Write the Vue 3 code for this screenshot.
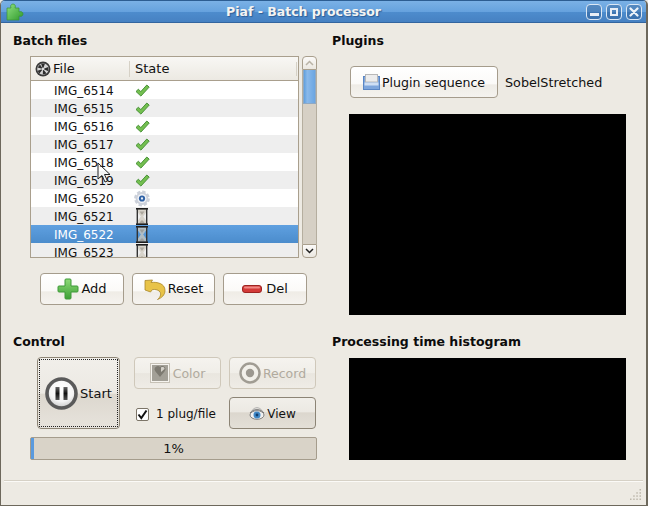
<script setup>
const rows = [
  { name: 'IMG_6514', state: 'ok' },
  { name: 'IMG_6515', state: 'ok' },
  { name: 'IMG_6516', state: 'ok' },
  { name: 'IMG_6517', state: 'ok' },
  { name: 'IMG_6518', state: 'ok' },
  { name: 'IMG_6519', state: 'ok' },
  { name: 'IMG_6520', state: 'run' },
  { name: 'IMG_6521', state: 'wait' },
  { name: 'IMG_6522', state: 'wait', selected: true },
  { name: 'IMG_6523', state: 'wait' }
]
</script>

<template>
  <div class="window">
    <header class="titlebar">
      <svg class="app-icon" width="18" height="18" viewBox="0 0 18 18">
        <defs>
          <linearGradient id="pz" x1="0" y1="0" x2="1" y2="1">
            <stop offset="0" stop-color="#8fe07f"/>
            <stop offset="1" stop-color="#2f9a2c"/>
          </linearGradient>
        </defs>
        <path d="M1 5h4C4 3 5 1 7 1s3 2 2 4h4v4c2-1 4 0 4 2s-2 3-4 2v4H1z" fill="url(#pz)" stroke="#3a9434" stroke-width=".7" stroke-linejoin="round"/>
      </svg>
      <span class="title">Piaf - Batch processor</span>
      <div class="wm-buttons">
        <span class="wm"><i class="wm-min"></i></span>
        <span class="wm"><i class="wm-max"></i></span>
        <span class="wm">
          <svg width="10" height="10" viewBox="0 0 10 10"><path d="M1.500 1.500l7 7M8.500 1.500l-7 7" stroke="#eef3f9" stroke-width="2.200" stroke-linecap="round"/></svg>
        </span>
      </div>
    </header>

    <main class="content">
      <section class="left">
        <h2>Batch files</h2>
        <div class="list-area">
          <div class="table">
            <div class="thead">
              <div class="th th-file">
                <svg width="16" height="16" viewBox="0 0 16 16">
                  <circle cx="8" cy="8" r="7.500" fill="#3a3a3a"/>
                  <circle cx="8" cy="8" r="5.800" fill="#d4d4d4"/>
                  <path d="M8 8 6 2.600h4zM8 8l5.300-2 .2 4.200zM8 8l3.600 4.400-3.800 1.200zM8 8l-3.600 4.400L2.500 9.800zM8 8 2.600 6.400 5 3.400z" fill="#2d2d2d"/>
                  <circle cx="8" cy="8" r="1.300" fill="#ddd"/>
                </svg>
                <span>File</span>
              </div>
              <div class="th th-state">State</div>
            </div>
            <div class="tbody">
              <div v-for="(r, i) in rows" :key="r.name" class="row" :class="{ alt: i % 2 === 1, sel: r.selected }">
                <span class="name">{{ r.name }}</span>
                <span class="state">
                  <svg v-if="r.state === 'ok'" width="15" height="13" viewBox="0 0 15 13">
                    <path d="M1 7.500 3.400 5.200 5.800 7.600 11.800 1l2.400 2.100-8.300 9z" fill="#74bf50" stroke="#3d8a2d" stroke-width=".9" stroke-linejoin="round"/>
                  </svg>
                  <svg v-else-if="r.state === 'run'" width="17" height="17" viewBox="0 0 17 17">
                    <circle cx="8.500" cy="8.500" r="6.800" fill="#ccd1da"/>
                    <circle cx="8.500" cy="8.500" r="7" fill="none" stroke="#ccd1da" stroke-width="2.800" stroke-dasharray="3.500 2"/>
                    <circle cx="8.500" cy="8.500" r="4.800" fill="#f0f2f6"/>
                    <circle cx="8.500" cy="8.500" r="3.300" fill="#2f62a6"/>
                    <circle cx="8.500" cy="8.500" r="1.200" fill="#e8eef8"/>
                  </svg>
                  <svg v-else class="glass" width="12" height="17" viewBox="0 0 12 17">
                    <path d="M2 1h8v3.500L7.200 8.500l2.800 4V16H2v-3.500l2.800-4L2 4.500z" fill="#cfcabd" fill-opacity=".75"/>
                    <path d="M5.200 12.500h1.600l2 2.700H3.200zM3.600 3.500h4.800L6 7z" fill="#8f8b80" fill-opacity=".6"/>
                    <rect x="0" y="0" width="12" height="1.600" fill="#1c1c1c"/>
                    <rect x="0" y="15.400" width="12" height="1.600" fill="#1c1c1c"/>
                    <rect x=".6" y="1" width="1.400" height="15" fill="#333"/>
                    <rect x="10" y="1" width="1.400" height="15" fill="#333"/>
                  </svg>
                </span>
              </div>
            </div>
          </div>
          <div class="scrollbar">
            <div class="sb-btn sb-up"><svg width="9" height="6" viewBox="0 0 9 6"><path d="M1 5 4.500 1.500 8 5" fill="none" stroke="#b9b3a6" stroke-width="1.500"/></svg></div>
            <div class="sb-track"><div class="sb-thumb"></div></div>
            <div class="sb-btn sb-down"><svg width="9" height="6" viewBox="0 0 9 6"><path d="M1 1 4.500 4.500 8 1" fill="none" stroke="#222" stroke-width="1.500"/></svg></div>
          </div>
        </div>
        <div class="list-buttons">
          <button class="btn b-add">
            <svg width="22" height="22" viewBox="0 0 22 22">
              <defs>
                <linearGradient id="plus" x1="0" y1="0" x2="0" y2="1">
                  <stop offset="0" stop-color="#8edb78"/>
                  <stop offset="1" stop-color="#3d9f35"/>
                </linearGradient>
              </defs>
              <path d="M9 1h4a1 1 0 0 1 1 1v6h6a1 1 0 0 1 1 1v4a1 1 0 0 1-1 1h-6v6a1 1 0 0 1-1 1H9a1 1 0 0 1-1-1v-6H2a1 1 0 0 1-1-1V9a1 1 0 0 1 1-1h6V2a1 1 0 0 1 1-1z" fill="url(#plus)" stroke="#3f9a38"/>
            </svg>
            Add
          </button>
          <button class="btn b-reset">
            <svg width="22" height="21" viewBox="0 0 22 21">
              <path d="M1 1.500 8.500 1 7 3.500c6-.8 14 1 14 8 0 4.500-3.500 7.500-7.500 9 3-2.500 3.500-5 2.800-7-1-2.500-5-3.500-8-2.800L6.500 13 1 11z" fill="#e8c348" stroke="#a8862a" stroke-width=".8" stroke-linejoin="round"/>
            </svg>
            Reset
          </button>
          <button class="btn b-del">
            <svg width="20" height="8" viewBox="0 0 20 8"><rect x=".5" y=".5" width="19" height="7" rx="2.500" fill="#d33a38" stroke="#9c2422"/><rect x="2" y="1.500" width="16" height="2" rx="1" fill="#f08a86"/></svg>
            Del
          </button>
        </div>

        <h2 class="h-control">Control</h2>
        <div class="control">
          <button class="btn start">
            <span class="focus">
              <svg width="33" height="33" viewBox="0 0 33 33">
                <defs>
                  <radialGradient id="face" cx=".5" cy=".35" r=".7">
                    <stop offset="0" stop-color="#ffffff"/>
                    <stop offset=".6" stop-color="#f4f4f4"/>
                    <stop offset="1" stop-color="#bdbdbd"/>
                  </radialGradient>
                  <linearGradient id="pbar" x1="0" y1="0" x2="0" y2="1">
                    <stop offset="0" stop-color="#666"/>
                    <stop offset=".5" stop-color="#111"/>
                    <stop offset="1" stop-color="#555"/>
                  </linearGradient>
                </defs>
                <circle cx="16.500" cy="16.500" r="14.500" fill="url(#face)" stroke="#5a5a5a" stroke-width="3.600"/>
                <rect x="10.500" y="10" width="4" height="13" fill="url(#pbar)"/>
                <rect x="18.500" y="10" width="4" height="13" fill="url(#pbar)"/>
              </svg>
              Start
            </span>
          </button>
          <div class="ctl-grid">
            <button class="btn small disabled f125">
              <svg width="20" height="20" viewBox="0 0 20 20">
                <rect x=".5" y=".5" width="19" height="19" fill="#f6f4ef" stroke="#c6c1b6"/>
                <rect x="2" y="2" width="16" height="16" fill="#a3a097"/>
                <path d="M10 4c1.500-2 6-1 5.500 2.500C15 9 12 11 10 14 8 11 5 9 4.500 6.500 4.500 3.500 8.500 2 10 4z" fill="#7d7a71"/>
                <path d="M11 4.500c1.500-1 3.500-.5 3.500 1.500l-3.500 3z" fill="#d3d0c8"/>
              </svg>
              Color
            </button>
            <button class="btn small disabled f125 rec">
              <svg width="22" height="22" viewBox="0 0 22 22"><circle cx="11" cy="11" r="9.500" fill="#f2f0ea" stroke="#a09c93" stroke-width="2.400"/><circle cx="11" cy="11" r="4.200" fill="#9c9890"/></svg>
              Record
            </button>
            <label class="check">
              <span class="box"><svg width="11" height="11" viewBox="0 0 11 11"><path d="M1.500 5.500 4.300 9 9.500 1.500" fill="none" stroke="#111" stroke-width="2"/></svg></span>
              1 plug/file
            </label>
            <button class="btn small pressed f12">
              <svg width="16" height="14" viewBox="0 0 16 14"><path d="M1 7C4 2.500 12 2.500 15 7" fill="none" stroke="#777" stroke-width="1"/><path d="M3 4.500C6 .8 10 .8 13 4.500" fill="none" stroke="#aaa" stroke-width="1"/><ellipse cx="8" cy="9" rx="7" ry="4.300" fill="#f0f0f0" stroke="#666" stroke-width=".8"/><circle cx="8" cy="9" r="3.500" fill="#3f87c6"/><circle cx="8" cy="9" r="1.400" fill="#123f6e"/></svg>
              View
            </button>
          </div>
        </div>
        <div class="progress">
          <div class="bar" :style="{ width: '1%' }"></div>
          <span>1%</span>
        </div>
      </section>

      <section class="right">
        <h2>Plugins</h2>
        <div class="plugin-row">
          <button class="btn seq">
            <svg width="17" height="16" viewBox="0 0 17 16">
              <rect x=".5" y="2.500" width="16" height="13" fill="#7ea6dc" stroke="#5a86c4"/>
              <rect x="2.500" y=".5" width="12" height="7.500" fill="#ececec" stroke="#b8b8b8"/>
              <rect x="1.500" y="8.500" width="14" height="3" fill="#cfdff4"/>
            </svg>
            Plugin sequence
          </button>
          <span class="plugin-name">SobelStretched</span>
        </div>
        <div class="screen s1"></div>
        <h2 class="h-hist">Processing time histogram</h2>
        <div class="screen s2"></div>
      </section>
    </main>

    <footer class="status">
      <svg class="grip" width="11" height="11" viewBox="0 0 11 11" fill="#bdb8ac">
        <rect x="9.500" y="0" width="1.500" height="1.500"/><rect x="6.300" y="3.200" width="1.500" height="1.500"/><rect x="9.500" y="3.200" width="1.500" height="1.500"/>
        <rect x="3.200" y="6.300" width="1.500" height="1.500"/><rect x="6.300" y="6.300" width="1.500" height="1.500"/><rect x="9.500" y="6.300" width="1.500" height="1.500"/>
        <rect x="0" y="9.500" width="1.500" height="1.500"/><rect x="3.200" y="9.500" width="1.500" height="1.500"/><rect x="6.300" y="9.500" width="1.500" height="1.500"/><rect x="9.500" y="9.500" width="1.500" height="1.500"/>
      </svg>
    </footer>

    <svg class="cursor" width="15" height="22" viewBox="0 0 15 22"><path d="M1 1v16l4-3.500 3 6.500 2.500-1-3-6.500h5.500z" fill="rgba(255,255,255,.35)" stroke="#222" stroke-width="1"/></svg>
  </div>
</template>

<style>
html, body { margin: 0; padding: 0; background: #edeae3; }
</style>

<style scoped>
.window {
  position: relative;
  width: 648px;
  height: 506px;
  box-sizing: border-box;
  display: flex;
  flex-direction: column;
  background: #edeae3;
  border: 1px solid #6d685c;
  border-right-width: 2px;
  border-top-color: #2c5d92;
  border-radius: 5px 5px 0 0;
  overflow: hidden;
  font: 13px "DejaVu Sans", sans-serif;
  color: #111;
}
.titlebar {
  height: 21px;
  flex: none;
  display: flex;
  align-items: center;
  position: relative;
  background: linear-gradient(#7ab1e6 0, #66a2de 50%, #4d8ccd 52%, #4681c2 100%);
  border-bottom: 1px solid #33659f;
}
.app-icon { margin-left: 5px; }
.title {
  position: absolute;
  left: 225px;
  color: #f4f4f2;
  font-weight: bold;
  font-size: 12.5px;
  white-space: nowrap;
  text-shadow: 1px 1px 1px #2d5d95;
}
.wm-buttons { margin-left: auto; display: flex; gap: 4px; margin-right: 4px; position: relative; }
.wm {
  width: 16px; height: 16px;
  box-sizing: border-box;
  border: 1px solid #dbe7f4;
  border-radius: 4px;
  background: rgba(40, 85, 140, .4);
  display: flex; align-items: center; justify-content: center;
}
.wm-min { width: 9px; height: 3px; background: #e8eef6; margin-top: 6px; }
.wm-max { width: 8px; height: 8px; box-sizing: border-box; border: 2px solid #e8eef6; }

.content { flex: 1; display: flex; min-height: 0; }
h2 { margin: 0; font-size: 12.5px; font-weight: bold; line-height: 16px; color: #0c0c0c; }
.left { width: 318px; flex: none; box-sizing: border-box; padding: 10px 0 0 12px; }
.right { flex: 1; padding: 10px 0 0 13px; }

.list-area { display: flex; margin: 7px 0 0 17px; gap: 3px; width: 287px; height: 202px; }
.table {
  width: 269px;
  box-sizing: border-box;
  border: 1px solid #a99f8d;
  background: #fff;
  overflow: hidden;
}
.thead {
  display: flex; height: 23px;
  background: linear-gradient(#f8f7f4, #ece9e2);
  border-bottom: 1px solid #a99f8d;
  align-items: center;
}
.th { height: 14px; display: flex; align-items: center; border-right: 1px solid #d6d1c6; }
.th-file { width: 99px; box-sizing: border-box; padding-left: 4px; gap: 2px; height: 16px; }
.th-state { flex: 1; padding-left: 5px; margin-right: 1px; }
.row { height: 18px; display: flex; align-items: center; background: #fff; font-size: 12px; }
.row.alt { background: #eeeeee; }
.row.sel { background: linear-gradient(#5fa0e0, #4b8ccc); color: #fff; }
.name { width: 103px; padding: 2px 0 0 23px; box-sizing: border-box; flex: none; }
.state { display: flex; width: 16px; justify-content: center; }
.glass { flex: none; }

.scrollbar { width: 15px; display: flex; flex-direction: column; }
.sb-btn {
  height: 14px; flex: none;
  box-sizing: border-box;
  border: 1px solid #a99f8d;
  background: linear-gradient(#fbfaf8, #ebe8e1);
  display: flex; align-items: center; justify-content: center;
}
.sb-up { border-radius: 4px 4px 0 0; }
.sb-down { border-radius: 0 0 4px 4px; }
.sb-track { flex: 1; background: #d6d0c5; border-left: 1px solid #b5ae9f; border-right: 1px solid #b5ae9f; }
.sb-thumb { height: 34px; background: linear-gradient(90deg, #5f9fde, #8ab9ea 30%, #6ba6e2); border: 1px solid #8fa9c4; border-top: 0; box-sizing: border-box; }

.btn {
  font: inherit;
  color: #111;
  display: flex; align-items: center; justify-content: center;
  gap: 3px;
  padding: 0;
  box-sizing: border-box;
  height: 32px;
  border: 1px solid #a59c8c;
  border-radius: 4px;
  background: linear-gradient(#ffffff 0, #fbfaf8 55%, #efece6 60%, #f5f3ef 100%);
}
.f125 { font-size: 12.5px; }
.f12 { font-size: 12px; gap: 2px; padding-top: 2px; }
.f12 svg { margin-bottom: 2px; }
.rec { gap: 2px; }
.list-buttons { display: flex; margin: 15px 0 0 27px; gap: 8px; }
.list-buttons .btn { padding-bottom: 2px; }
.list-buttons svg { margin-top: 2px; }
.b-add { width: 84px; gap: 2px; }
.b-reset { width: 83px; gap: 2px; font-size: 12.7px; }
.b-del { width: 84px; gap: 4px; }

.h-control { margin-top: 29px; }
.control { display: flex; margin: 7px 0 0 24px; }
.start {
  width: 83px; height: 72px;
  padding: 1px;
  background: linear-gradient(#f1efea 0, #ece9e3 50%, #dcd7ce 52%, #e7e3dc 100%);
  border-color: #8c8475;
}
.focus {
  flex: 1; align-self: stretch;
  border: 1px dotted #222;
  display: flex; align-items: center; justify-content: center; gap: 2px;
}
.ctl-grid {
  margin-left: 14px;
  display: grid;
  grid-template-columns: 87px 87px;
  grid-template-rows: 32px 32px;
  gap: 8px;
}
.small { width: 87px; }
.disabled {
  color: #b0aa9e;
  border-color: #cfc8ba;
  background: linear-gradient(#f5f3ef 0, #f0eee8 50%, #e9e6df 52%, #efece6 100%);
}
.pressed {
  border-color: #8c8475;
  background: linear-gradient(#f1efea 0, #ece9e3 45%, #dcd7ce 50%, #e3dfd7 100%);
}
.check { display: flex; align-items: center; gap: 7px; padding: 2px 0 0 2px; font-size: 12px; }
.box {
  width: 13px; height: 13px;
  box-sizing: border-box;
  border: 1px solid #7c7568;
  background: #fff;
  border-radius: 2px;
  display: flex; align-items: center; justify-content: center;
}
.progress {
  position: relative;
  margin: 8px 0 0 17px;
  width: 287px; height: 23px;
  box-sizing: border-box;
  border: 1px solid #a59c8c;
  border-radius: 2px;
  background: #d9d3c8;
  display: flex; align-items: center; justify-content: center;
}
.bar { position: absolute; left: 0; top: 0; bottom: 0; background: #5a9ade; min-width: 3px; }

.plugin-row { display: flex; align-items: center; margin: 17px 0 0 18px; gap: 7px; }
.seq { width: 148px; gap: 2px; font-size: 12.6px; }
.plugin-name { font-size: 12.75px; }
.screen { background: #000; width: 277px; margin-left: 17px; }
.s1 { height: 201px; margin-top: 16px; }
.h-hist { margin-top: 19px; }
.s2 { height: 102px; margin-top: 8px; }

.status {
  flex: none; height: 24px;
  border-top: 1px solid #d6d1c6;
  box-shadow: inset 0 1px 0 #fbfaf7;
  position: relative;
  margin: 0 3px;
  display: flex; justify-content: flex-end; align-items: flex-end;
}
.grip { margin: 0 2px 5px 0; }
.cursor { position: absolute; left: 96px; top: 161px; }
</style>
